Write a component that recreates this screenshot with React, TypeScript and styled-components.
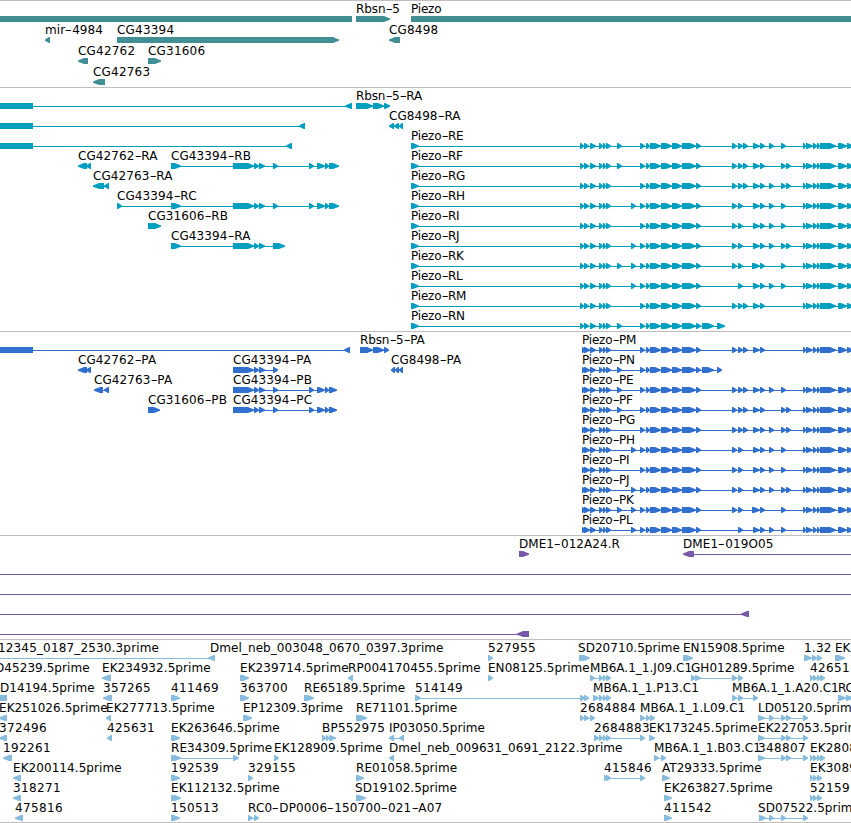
import { Fragment } from 'react';
import styled, { createGlobalStyle } from 'styled-components';

type Exon = [number, number];

interface Feature {
  name?: string;
  exons: Exon[];
  reverse?: boolean;
  blunt?: boolean;
  labelX?: number;
  line?: Exon;
}

interface TrackData {
  id: string;
  color: string;
  rowHeight: number;
  rows: Feature[][];
}

const COLOR = {
  GENE: '#418f94',
  RNA: '#009fc0',
  PROTEIN: '#316fce',
  CLONE: '#7858a8',
  EST: '#87bcde',
  BORDER: '#bebebe',
};

const VIEW_WIDTH = 851;
const TIP = 6;

const fwd = (name: string, ...exons: Exon[]): Feature => ({ name, exons });
const rev = (name: string, ...exons: Exon[]): Feature => ({
  name,
  exons,
  reverse: true,
});

// exons shared by the Piezo isoforms
const HEAD: Exon[] = [[590, 596], [599, 603], [603, 606], [606, 611]];
const MIDDLE: Exon[] = [
  [640, 645], [646, 650], [650, 661], [661, 672], [672, 682], [682, 696], [696, 701],
];
const TAIL: Exon[] = [
  [803, 806], [806, 813], [813, 817], [817, 820], [820, 836], [838, 847], [847, 853],
];
const A: Exon = [617, 622];
const B: Exon = [631, 636];
const C: Exon = [732, 737];
const D: Exon = [738, 743];
const E: Exon = [743, 748];
const F: Exon = [753, 760];
const F2: Exon = [752, 760];
const G: Exon = [760, 765];
const H: Exon = [769, 774];
const I: Exon = [781, 786];
const J: Exon = [786, 791];

const PIEZO: Record<string, [Exon[], Exon[]]> = {
  E: [[A], [C, D, E, F, G, H, I]],
  F: [[A], [C, D, E, F, G, I, J]],
  G: [[], [C, D, E, F, G, H, I, J]],
  H: [[B], [C, D, F, G, H, I]],
  I: [[], [C, D, F, G, H, I]],
  J: [[B], [C, D, F, G, H, I, J]],
  K: [[A, B], [C, D, F2, G, I]],
  L: [[B], [D, F, G, H, I]],
  M: [[], [C, D, E, F, G]],
};

const piezo = (kind: 'R' | 'P', key: string): Feature => {
  const start: Exon[] =
    kind === 'R' ? [[411, 419], [580, 584], [584, 589]] : [[582, 585], [584, 590]];
  const name = `Piezo-${kind}${key}`;
  if (key === 'N') {
    const end: Exon = kind === 'R' ? [717, 725] : [717, 722];
    return fwd(name, ...start, ...HEAD, A, ...MIDDLE, [702, 714], end);
  }
  const [early, late] = PIEZO[key];
  return fwd(name, ...start, ...HEAD, ...early, ...MIDDLE, ...late, ...TAIL);
};

const CG43394_MID: Exon[] = [[233, 254], [254, 259], [259, 265]];
const CG43394_END: Exon[] = [[273, 278], [309, 314], [317, 325], [325, 329]];
const RUN: Exon[] = [[599, 603], [603, 606], [606, 611]];
const QUAD: Exon[] = [[810, 813], [813, 817], [817, 820], [820, 825]];
const TRIPLE: Exon[] = [[810, 813], [813, 817], [817, 822]];

const longReverse = (end: Exon): Feature => ({
  exons: [end],
  line: [33, end[1]],
  reverse: true,
});
const block: Feature = { exons: [[-20, 33]], blunt: true };

const TRACKS: TrackData[] = [
  {
    id: 'gene',
    color: COLOR.GENE,
    rowHeight: 21,
    rows: [
      [
        { exons: [[-20, 352]], blunt: true },
        fwd('Rbsn-5', [356, 390]),
        { name: 'Piezo', exons: [[411, 870]], blunt: true },
      ],
      [rev('mir-4984', [45, 50]), fwd('CG43394', [117, 339]), rev('CG8498', [389, 400])],
      [rev('CG42762', [78, 88]), fwd('CG31606', [148, 161])],
      [rev('CG42763', [93, 105])],
    ],
  },
  {
    id: 'rna',
    color: COLOR.RNA,
    rowHeight: 20,
    rows: [
      [block, longReverse([345, 352]), fwd('Rbsn-5-RA', [356, 373], [373, 384], [384, 390])],
      [block, longReverse([299, 305]), rev('CG8498-RA', [389, 394], [394, 399], [399, 403])],
      [block, longReverse([286, 292]), piezo('R', 'E')],
      [
        rev('CG42762-RA', [78, 87], [86, 91]),
        fwd('CG43394-RB', [171, 181], ...CG43394_MID, ...CG43394_END, [329, 339]),
        piezo('R', 'F'),
      ],
      [rev('CG42763-RA', [93, 104], [104, 109]), piezo('R', 'G')],
      [
        fwd('CG43394-RC', [117, 122], [171, 181], ...CG43394_MID, ...CG43394_END, [329, 339]),
        piezo('R', 'H'),
      ],
      [fwd('CG31606-RB', [148, 151], [149, 161]), piezo('R', 'I')],
      [fwd('CG43394-RA', [171, 181], ...CG43394_MID, [273, 285]), piezo('R', 'J')],
      [piezo('R', 'K')],
      [piezo('R', 'L')],
      [piezo('R', 'M')],
      [piezo('R', 'N')],
    ],
  },
  {
    id: 'protein',
    color: COLOR.PROTEIN,
    rowHeight: 20,
    rows: [
      [
        block,
        longReverse([344, 350]),
        fwd('Rbsn-5-PA', [360, 373], [373, 384], [384, 389]),
        piezo('P', 'M'),
      ],
      [
        rev('CG42762-PA', [78, 87], [86, 91]),
        fwd('CG43394-PA', ...CG43394_MID, [273, 278]),
        rev('CG8498-PA', [391, 395], [395, 399], [399, 403]),
        piezo('P', 'N'),
      ],
      [
        rev('CG42763-PA', [94, 103], [104, 109]),
        fwd('CG43394-PB', ...CG43394_MID, ...CG43394_END, [329, 337]),
        piezo('P', 'E'),
      ],
      [
        fwd('CG31606-PB', [148, 151], [149, 160]),
        fwd('CG43394-PC', ...CG43394_MID, ...CG43394_END, [329, 337]),
        piezo('P', 'F'),
      ],
      [piezo('P', 'G')],
      [piezo('P', 'H')],
      [piezo('P', 'I')],
      [piezo('P', 'J')],
      [piezo('P', 'K')],
      [piezo('P', 'L')],
    ],
  },
  {
    id: 'clone',
    color: COLOR.CLONE,
    rowHeight: 20,
    rows: [
      [
        fwd('DME1-012A24.R', [519, 529]),
        { name: 'DME1-019O05', exons: [[683, 694]], line: [690, 860], reverse: true },
      ],
      [{ exons: [], line: [0, 860] }],
      [{ exons: [], line: [0, 860] }],
      [{ exons: [[741, 749]], line: [0, 749], reverse: true }],
      [{ exons: [[517, 529]], line: [0, 520], reverse: true }],
    ],
  },
  {
    id: 'est',
    color: COLOR.EST,
    rowHeight: 20,
    rows: [
      [
        {
          name: '12345_0187_2530.3prime',
          labelX: -2,
          exons: [[208, 215]],
          line: [0, 210],
          reverse: true,
        },
        { name: 'Dmel_neb_003048_0670_0397.3prime', labelX: 210, exons: [] },
        fwd('527955', [488, 493]),
        { name: 'SD20710.5prime', labelX: 578, exons: [[579, 590]] },
        fwd('EN15908.5prime', [683, 693]),
        fwd('1.32', [804, 812], [812, 817], [817, 822]),
        fwd('EK', [835, 845]),
      ],
      [
        { name: 'D45239.5prime', labelX: -5, exons: [] },
        rev('EK234932.5prime', [102, 111]),
        fwd('EK239714.5prime', [240, 249]),
        rev('RP004170455.5prime', [348, 353]),
        fwd('EN08125.5prime', [488, 493]),
        fwd('MB6A.1_1.J09.C1', [590, 595], ...RUN),
        fwd('GH01289.5prime', [691, 696], [695, 701], C, D),
        fwd('42651', ...QUAD),
      ],
      [
        { name: 'D14194.5prime', labelX: 0, exons: [[-5, 7]], blunt: true },
        rev('357265', [103, 112]),
        fwd('411469', [171, 180]),
        fwd('363700', [240, 249]),
        fwd('RE65189.5prime', [304, 314]),
        fwd('514149', [415, 421], [580, 585], [584, 589]),
        fwd('MB6A.1_1.P13.C1', [593, 599], ...RUN),
        fwd('MB6A.1_1.A20.C1', C, D, [753, 758]),
        fwd('RC', [838, 846], [846, 853]),
      ],
      [
        rev('EK251026.5prime', [-1, 7]),
        rev('EK277713.5prime', [106, 111]),
        fwd('EP12309.3prime', [243, 252]),
        fwd('RE71101.5prime', [356, 367]),
        fwd('2684884', [580, 584], [584, 589], [590, 595]),
        fwd('MB6A.1_1.L09.C1', [640, 645], [646, 650], [650, 655]),
        fwd('LD05120.5prime', [758, 765], H, I, J, [803, 808]),
      ],
      [
        rev('372496', [-1, 7]),
        rev('425631', [107, 112]),
        fwd('EK263646.5prime', [171, 180]),
        fwd('BP552975', [322, 326], [326, 329], [329, 336]),
        rev('IP03050.5prime', [389, 394], [399, 404]),
        fwd('2684883', [594, 599], ...RUN, [640, 645]),
        fwd('EK173245.5prime', [649, 655]),
        fwd('EK227053.5prime', [758, 765], I, J, [803, 808]),
      ],
      [
        rev('192261', [3, 12]),
        fwd('RE34309.5prime', [171, 181], [233, 239]),
        fwd('EK128909.5prime', [274, 279]),
        rev('Dmel_neb_009631_0691_2122.3prime', [389, 394]),
        fwd('MB6A.1_1.B03.C1', [654, 659], [661, 666]),
        fwd('348807', [758, 765], I, J, [803, 808]),
        fwd('EK2808', ...QUAD),
      ],
      [
        rev('EK200114.5prime', [13, 21]),
        fwd('192539', [171, 180]),
        fwd('329155', [248, 253]),
        fwd('RE01058.5prime', [356, 364]),
        fwd('415846', [604, 607], [606, 611], [640, 645]),
        fwd('AT29333.5prime', [662, 670]),
        fwd('EK3089', ...TRIPLE),
      ],
      [
        rev('318271', [13, 21]),
        fwd('EK112132.5prime', [171, 181]),
        { name: 'SD19102.5prime', labelX: 355, exons: [[356, 366]] },
        fwd('EK263827.5prime', [664, 672]),
        fwd('52159', ...TRIPLE),
      ],
      [
        rev('475816', [15, 23]),
        fwd('150513', [171, 180]),
        fwd('RC0-DP0006-150700-021-A07', [248, 253], [254, 259]),
        fwd('411542', [664, 672]),
        { name: 'SD07522.5prime', labelX: 758, exons: [[759, 766], H, I, [803, 808]] },
      ],
    ],
  },
];

const exonPath = ([x0, x1]: Exon, reverse?: boolean, blunt?: boolean) => {
  if (blunt) return `M${x0} 0H${x1}V6H${x0}Z`;
  const tip = Math.min(TIP, x1 - x0 - 1);
  return reverse
    ? `M${x1} 0H${x0 + tip}L${x0} 2.4V3.8L${x0 + tip} 6H${x1}Z`
    : `M${x0} 0H${x1 - tip}L${x1} 2.4V3.8L${x1 - tip} 6H${x0}Z`;
};

const getLine = ({ line, exons }: Feature): Exon | null => {
  if (line) return line;
  if (exons.length < 2) return null;
  return [exons[0][0], exons[exons.length - 1][1] - 1];
};

// digits are set a little wider than letters
const getSpacing = (name: string) => {
  const digits = name.replace(/\D/g, '').length;
  const total = digits * 0.36 - (name.length - digits) * 0.2;
  return total / name.length;
};

const Name = ({ text }: { text: string }) => (
  <>
    {text.split('-').map((part, i) => (
      <Fragment key={i}>
        {i > 0 && <Hyphen>-</Hyphen>}
        {part}
      </Fragment>
    ))}
  </>
);

const Glyph = ({ feature }: { feature: Feature }) => {
  const line = getLine(feature);

  return (
    <g>
      {line && <rect x={line[0]} y={3} width={line[1] - line[0]} height={1} />}
      {feature.exons.map((exon, i) => (
        <path key={i} d={exonPath(exon, feature.reverse, feature.blunt)} />
      ))}
    </g>
  );
};

const Track = ({ track }: { track: TrackData }) => (
  <TrackBox>
    {track.rows.map((row, i) => (
      <Row key={i} $height={track.rowHeight}>
        {row.map(
          (feature) =>
            feature.name && (
              <Label
                key={feature.name}
                $top={track.rowHeight - 20}
                style={{
                  left: feature.labelX ?? feature.exons[0][0],
                  letterSpacing: getSpacing(feature.name),
                }}
              >
                <Name text={feature.name} />
              </Label>
            )
        )}
        <Strip width={VIEW_WIDTH} height={6} $color={track.color}>
          {row.map((feature, j) => (
            <Glyph key={j} feature={feature} />
          ))}
        </Strip>
      </Row>
    ))}
  </TrackBox>
);

const App = () => (
  <>
    <GlobalStyle />
    <Browser>
      {TRACKS.map((track) => (
        <Track key={track.id} track={track} />
      ))}
    </Browser>
  </>
);

const GlobalStyle = createGlobalStyle`
  body {
    margin: 0;
    background: #fff;
  }
`;

const Browser = styled.main`
  width: ${VIEW_WIDTH}px;
  height: 823px;
  box-sizing: border-box;
  overflow: hidden;

  display: flex;
  flex-direction: column;

  font-family: 'DejaVu Sans', sans-serif;
  font-size: 12px;
  line-height: 14px;
  color: #000;
`;

const TrackBox = styled.section`
  flex: none;
  padding: 1px 0 2px;
  border-top: 1px solid ${COLOR.BORDER};

  &:first-child {
    padding-top: 0;
  }

  &:last-child {
    padding-bottom: 1px;
    border-bottom: 1px solid ${COLOR.BORDER};
  }
`;

const Row = styled.div<{ $height: number }>`
  position: relative;
  height: ${({ $height }) => $height}px;

  display: flex;
  align-items: flex-end;
`;

const Label = styled.span<{ $top: number }>`
  position: absolute;
  top: ${({ $top }) => $top}px;
  white-space: nowrap;
`;

const Hyphen = styled.span`
  display: inline-block;
  margin: 0 1.25px;
  transform: scaleX(1.6);
`;

const Strip = styled.svg<{ $color: string }>`
  display: block;
  flex: none;
  fill: ${({ $color }) => $color};
`;

export default App;
